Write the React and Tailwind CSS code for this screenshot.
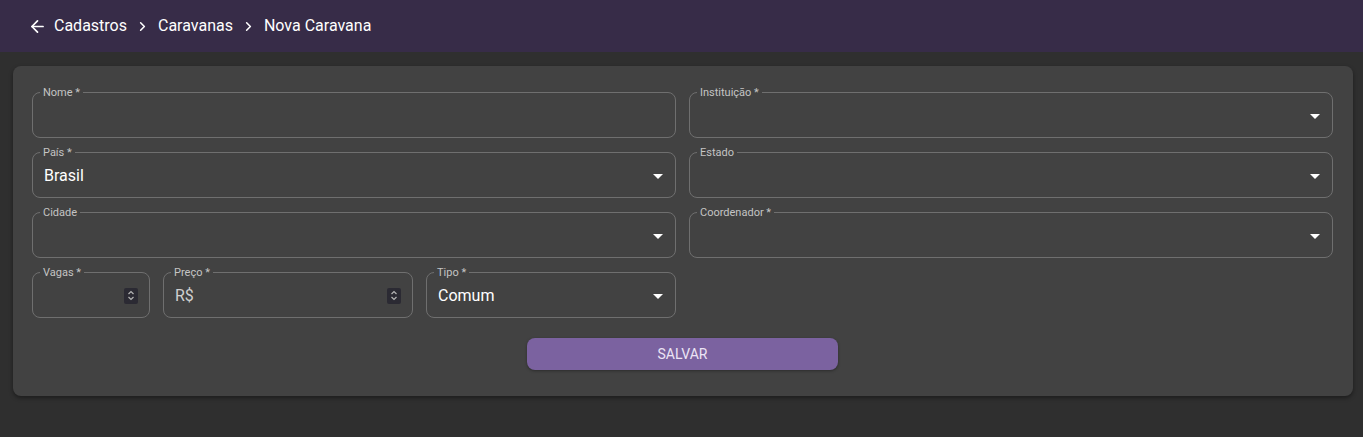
import { ArrowLeft, ChevronRight } from "lucide-react";

function Caret() {
  return (
    <svg width="24" height="24" viewBox="0 0 24 24" className="text-white shrink-0">
      <path d="M7 10l5 5 5-5z" fill="currentColor" />
    </svg>
  );
}

function Spinner() {
  return (
    <div className="w-[14px] h-[16px] bg-[#2b2a33] rounded-[2px] flex items-center justify-center shrink-0">
      <svg width="8" height="11" viewBox="0 0 8 11" fill="none" stroke="#b5b5b5" strokeWidth="1.2">
        <path d="M1.5 4l2.5-2.5L6.5 4" />
        <path d="M1.5 7l2.5 2.5L6.5 7" />
      </svg>
    </div>
  );
}

function Field({ label, value, prefix, select, number }) {
  return (
    <fieldset className="border border-[#6f6f6f] rounded-lg px-[8px] min-w-0 m-0">
      <legend className="px-[3px] -ml-[1px] text-[11px] leading-[13px] text-[#c4c4c4]">{label}</legend>
      <div className="h-[38px] pb-[5px] pl-[3px] flex items-center justify-between">
        <span className="text-[16px] text-white">{value}</span>
        {prefix && <span className="text-[16px] text-[#cfcfcf] flex-1">{prefix}</span>}
        {select && <div className="mr-[-3px]"><Caret /></div>}
        {number && <div className="mr-[3px]"><Spinner /></div>}
      </div>
    </fieldset>
  );
}

export default function App() {
  return (
    <div className="min-h-screen bg-[#2f2f2f] font-['Roboto',sans-serif] pb-4">
      <header className="h-[52px] bg-[#372c48] flex items-center pl-[28px] text-white text-[16px]">
        <ArrowLeft size={19} strokeWidth={2.2} className="mr-[7px]" />
        <span>Cadastros</span>
        <ChevronRight size={15} strokeWidth={2.5} className="mx-[8px]" />
        <span>Caravanas</span>
        <ChevronRight size={15} strokeWidth={2.5} className="mx-[8px]" />
        <span>Nova Caravana</span>
      </header>

      <div className="ml-[13px] mr-[10px] mt-[14px] bg-[#424242] rounded-lg shadow-[0_2px_4px_rgba(0,0,0,0.4)] pl-[19px] pr-[20px] pt-[20px] pb-[26px]">
        <div className="grid grid-cols-2 gap-x-[13px] gap-y-[8px]">
          <Field label="Nome *" />
          <Field label="Instituição *" select />
          <Field label="País *" value="Brasil" select />
          <Field label="Estado" select />
          <Field label="Cidade" select />
          <Field label="Coordenador *" select />
          <div className="grid grid-cols-[118px_1fr_1fr] gap-x-[13px]">
            <Field label="Vagas *" number />
            <Field label="Preço *" prefix="R$" number />
            <Field label="Tipo *" value="Comum" select />
          </div>
        </div>
        <div className="flex justify-center mt-[20px]">
          <button className="w-[311px] h-[32px] rounded-lg bg-[#7b62a0] text-[#ece4f5] text-[14px] uppercase shadow-[0_1px_3px_rgba(0,0,0,0.35)]">
            Salvar
          </button>
        </div>
      </div>
    </div>
  );
}
